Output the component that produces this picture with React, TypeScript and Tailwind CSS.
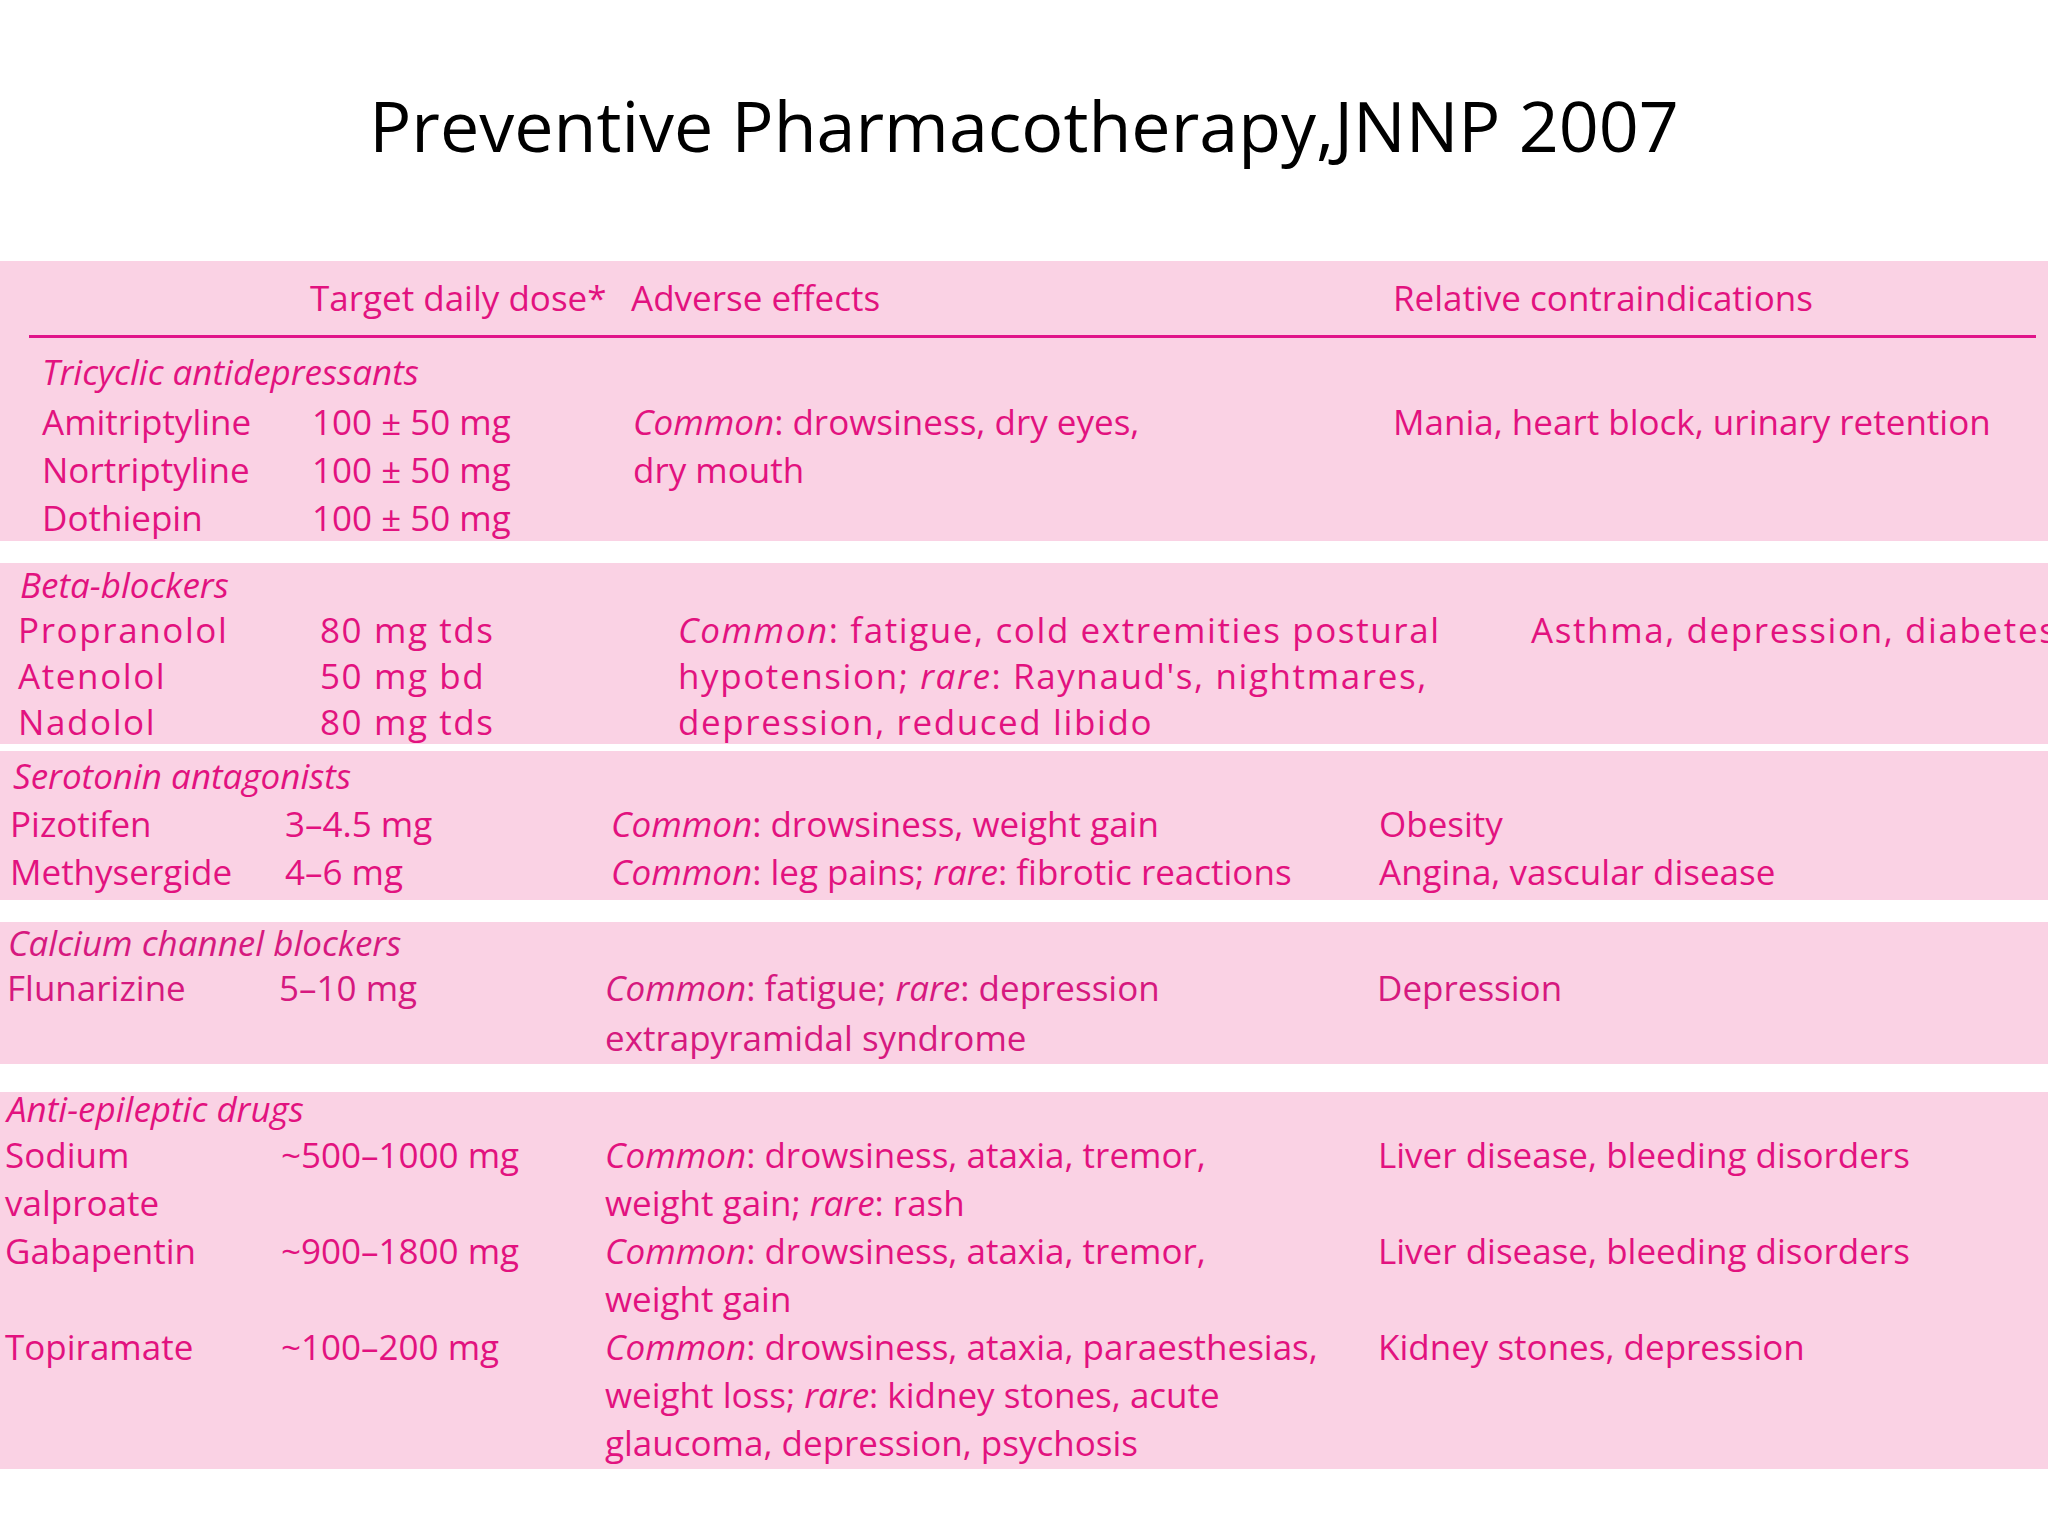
import React from "react";

type Seg = string | { i: string };
type Line = Seg[];

const L = (...s: Seg[]): Line => s;
const E: Line = [];

function Text({ line }: { line: Line }) {
  return (
    <>
      {line.length === 0 ? "\u00a0" : null}
      {line.map((s, k) =>
        typeof s === "string" ? (
          <span key={k}>{s}</span>
        ) : (
          <em key={k} className="italic">
            {s.i}
          </em>
        )
      )}
    </>
  );
}

function Col({
  lines,
  w,
  lh,
  extra = "",
}: {
  lines: Line[];
  w: string;
  lh: string;
  extra?: string;
}) {
  return (
    <div className={`${w} shrink-0 flex flex-col ${extra}`}>
      {lines.map((l, k) => (
        <div key={k} className={`${lh} whitespace-nowrap`}>
          <Text line={l} />
        </div>
      ))}
    </div>
  );
}

const font = { fontFamily: '"Open Sans", "Noto Sans", sans-serif' };

export default function App() {
  return (
    <div className="w-[2048px] h-[1536px] bg-white overflow-hidden flex flex-col" style={font}>
      {/* Title */}
      <div className="h-[261px] shrink-0 pt-[85px] text-center">
        <h1 className="text-[70px] leading-[80px] text-black font-normal">
          Preventive Pharmacotherapy,JNNP 2007
        </h1>
      </div>

      <div className="text-[35px] text-[#e2127f] flex flex-col">
        {/* Strip 1 : header + tricyclics */}
        <div className="h-[280px] bg-[#fad2e4] pt-[13px]">
          <div className="flex pl-[40px] h-[48px] leading-[48px] whitespace-nowrap">
            <div className="w-[270px] shrink-0" />
            <div className="w-[321px] shrink-0">Target daily dose*</div>
            <div className="w-[762px] shrink-0">Adverse effects</div>
            <div>Relative contraindications</div>
          </div>
          <div className="ml-[29px] mr-[12px] mt-[13px] h-[3px] bg-[#e0148a]" />
          <div className="pl-[42px] mt-[10px] h-[50px] leading-[48px] italic whitespace-nowrap">
            Tricyclic antidepressants
          </div>
          <div className="flex pl-[42px]">
            <Col
              w="w-[270px]"
              lh="h-[48px] leading-[48px]"
              lines={[L("Amitriptyline"), L("Nortriptyline"), L("Dothiepin")]}
            />
            <Col
              w="w-[321px]"
              lh="h-[48px] leading-[48px]"
              lines={[L("100 ± 50 mg"), L("100 ± 50 mg"), L("100 ± 50 mg")]}
            />
            <Col
              w="w-[760px]"
              lh="h-[48px] leading-[48px]"
              lines={[L({ i: "Common" }, ": drowsiness, dry eyes,"), L("dry mouth")]}
            />
            <Col
              w="w-[640px]"
              lh="h-[48px] leading-[48px]"
              lines={[L("Mania, heart block, urinary retention")]}
            />
          </div>
        </div>

        {/* Strip 2 : beta blockers */}
        <div className="h-[181px] mt-[22px] bg-[#fad2e4] tracking-[1.6px]">
          <div className="pl-[20px] h-[44px] leading-[44px] italic whitespace-nowrap tracking-normal">
            Beta-blockers
          </div>
          <div className="flex pl-[18px]">
            <Col
              w="w-[302px]"
              lh="h-[46px] leading-[46px]"
              lines={[L("Propranolol"), L("Atenolol"), L("Nadolol")]}
            />
            <Col
              w="w-[358px]"
              lh="h-[46px] leading-[46px]"
              lines={[L("80 mg tds"), L("50 mg bd"), L("80 mg tds")]}
            />
            <Col
              w="w-[853px]"
              lh="h-[46px] leading-[46px]"
              lines={[
                L({ i: "Common" }, ": fatigue, cold extremities postural"),
                L("hypotension; ", { i: "rare" }, ": Raynaud's, nightmares,"),
                L("depression, reduced libido"),
              ]}
            />
            <Col
              w="w-[600px]"
              lh="h-[46px] leading-[46px]"
              lines={[L("Asthma, depression, diabetes")]}
            />
          </div>
        </div>

        {/* Strip 3 : serotonin antagonists */}
        <div className="h-[149px] mt-[7px] bg-[#fad2e4] pt-[1px]">
          <div className="pl-[13px] h-[48px] leading-[48px] italic whitespace-nowrap">
            Serotonin antagonists
          </div>
          <div className="flex pl-[10px]">
            <Col
              w="w-[275px]"
              lh="h-[48px] leading-[48px]"
              lines={[L("Pizotifen"), L("Methysergide")]}
            />
            <Col
              w="w-[326px]"
              lh="h-[48px] leading-[48px]"
              lines={[L("3–4.5 mg"), L("4–6 mg")]}
            />
            <Col
              w="w-[768px]"
              lh="h-[48px] leading-[48px]"
              lines={[
                L({ i: "Common" }, ": drowsiness, weight gain"),
                L({ i: "Common" }, ": leg pains; ", { i: "rare" }, ": fibrotic reactions"),
              ]}
            />
            <Col
              w="w-[660px]"
              lh="h-[48px] leading-[48px]"
              lines={[L("Obesity"), L("Angina, vascular disease")]}
            />
          </div>
        </div>

        {/* Strip 4 : calcium channel blockers */}
        <div className="h-[142px] mt-[22px] bg-[#fad2e4] text-[#d6197f]">
          <div className="pl-[8px] h-[42px] leading-[42px] italic whitespace-nowrap">
            Calcium channel blockers
          </div>
          <div className="flex pl-[7px]">
            <Col w="w-[272px]" lh="h-[50px] leading-[48px]" lines={[L("Flunarizine")]} />
            <Col w="w-[326px]" lh="h-[50px] leading-[48px]" lines={[L("5–10 mg")]} />
            <Col
              w="w-[772px]"
              lh="h-[50px] leading-[48px]"
              lines={[
                L({ i: "Common" }, ": fatigue; ", { i: "rare" }, ": depression"),
                L("extrapyramidal syndrome"),
              ]}
            />
            <Col w="w-[660px]" lh="h-[50px] leading-[48px]" lines={[L("Depression")]} />
          </div>
        </div>

        {/* Strip 5 : anti-epileptic drugs */}
        <div className="h-[377px] mt-[28px] bg-[#fad2e4]">
          <div className="pl-[7px] h-[34px] leading-[34px] italic whitespace-nowrap">
            Anti-epileptic drugs
          </div>
          <div className="flex pl-[5px] mt-[5px]">
            <Col
              w="w-[276px]"
              lh="h-[48px] leading-[48px]"
              lines={[L("Sodium"), L("valproate"), L("Gabapentin"), E, L("Topiramate")]}
            />
            <Col
              w="w-[324px]"
              lh="h-[48px] leading-[48px]"
              lines={[L("~500–1000 mg"), E, L("~900–1800 mg"), E, L("~100–200 mg")]}
            />
            <Col
              w="w-[773px]"
              lh="h-[48px] leading-[48px]"
              lines={[
                L({ i: "Common" }, ": drowsiness, ataxia, tremor,"),
                L("weight gain; ", { i: "rare" }, ": rash"),
                L({ i: "Common" }, ": drowsiness, ataxia, tremor,"),
                L("weight gain"),
                L({ i: "Common" }, ": drowsiness, ataxia, paraesthesias,"),
                L("weight loss; ", { i: "rare" }, ": kidney stones, acute"),
                L("glaucoma, depression, psychosis"),
              ]}
            />
            <Col
              w="w-[660px]"
              lh="h-[48px] leading-[48px]"
              lines={[
                L("Liver disease, bleeding disorders"),
                E,
                L("Liver disease, bleeding disorders"),
                E,
                L("Kidney stones, depression"),
              ]}
            />
          </div>
        </div>
      </div>
    </div>
  );
}
